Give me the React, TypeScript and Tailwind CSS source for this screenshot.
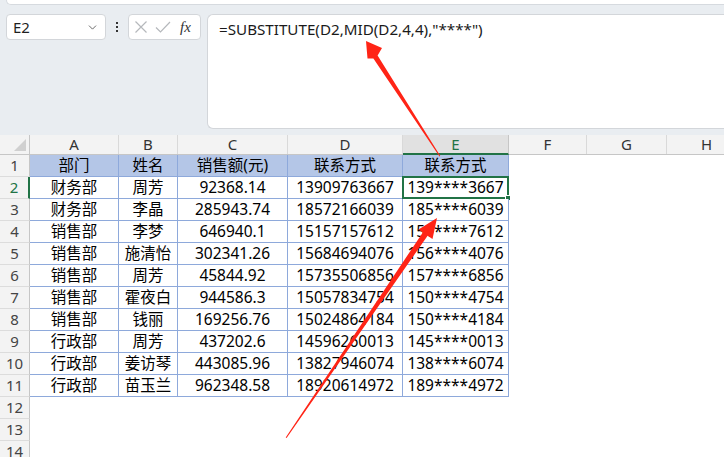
import { ChevronDown } from "lucide-react";

const font = { fontFamily: '"Noto Sans", "Noto Sans CJK SC", sans-serif' };

const cols = [
  { key: "A", w: "w-[89px]" },
  { key: "B", w: "w-[59px]" },
  { key: "C", w: "w-[110px]" },
  { key: "D", w: "w-[115px]" },
  { key: "E", w: "w-[106px]" },
  { key: "F", w: "w-[78px]" },
  { key: "G", w: "w-[80px]" },
  { key: "H", w: "w-[80px]" },
];

const header = ["部门", "姓名", "销售额(元)", "联系方式", "联系方式"];

const data = [
  ["财务部", "周芳", "92368.14", "13909763667", "139****3667"],
  ["财务部", "李晶", "285943.74", "18572166039", "185****6039"],
  ["销售部", "李梦", "646940.1", "15157157612", "151****7612"],
  ["销售部", "施清怡", "302341.26", "15684694076", "156****4076"],
  ["销售部", "周芳", "45844.92", "15735506856", "157****6856"],
  ["销售部", "霍夜白", "944586.3", "15057834754", "150****4754"],
  ["销售部", "钱丽", "169256.76", "15024864184", "150****4184"],
  ["行政部", "周芳", "437202.6", "14596260013", "145****0013"],
  ["行政部", "姜访琴", "443085.96", "13827946074", "138****6074"],
  ["行政部", "苗玉兰", "962348.58", "18920614972", "189****4972"],
];

const FormulaBar = () => (
  <div className="h-[135px] bg-[#e9edf1] shrink-0">
    <div className="ml-[6px] h-[5px] bg-white rounded-bl-md border-b border-l border-[#d6dadf]" />
    <div className="flex items-start mt-[9px] pl-[6px]">
      <div className="w-[100px] h-[26px] bg-white border border-[#d3d6da] rounded flex items-center justify-between pl-[6px] pr-[6px]">
        <span className="text-[15px] text-[#1f1f1f]">E2</span>
        <ChevronDown className="w-[13px] h-[13px] text-[#555]" strokeWidth={1.6} />
      </div>
      <div className="w-[22px] h-[26px] flex flex-col items-center justify-center gap-[2px]">
        <span className="w-[2px] h-[2px] bg-[#333]" />
        <span className="w-[2px] h-[2px] bg-[#333]" />
        <span className="w-[2px] h-[2px] bg-[#333]" />
      </div>
      <div className="w-[73px] h-[26px] bg-white border border-[#d3d6da] rounded flex items-center pl-[5px] gap-[7px]">
        <svg width="14" height="14" viewBox="0 0 14 14">
          <path d="M1.5 1.5 L12.5 12.5 M12.5 1.5 L1.5 12.5" stroke="#b5b8bc" strokeWidth="1.2" fill="none" />
        </svg>
        <svg width="16" height="14" viewBox="0 0 16 14">
          <path d="M1 7.5 L5.5 12 L15 2" stroke="#b5b8bc" strokeWidth="1.2" fill="none" />
        </svg>
        <span className="text-[15px] italic text-[#333] ml-[2px]" style={{ fontFamily: '"Liberation Serif", serif' }}>
          fx
        </span>
      </div>
      <div className="ml-[6px] flex-1 h-[115px] bg-white border border-[#d3d6da] rounded-l-md border-r-0 pl-[11px] pt-[2px]">
        <span className="text-[15.2px] leading-[20px] text-[#1a1a1a]">=SUBSTITUTE(D2,MID(D2,4,4),"****")</span>
      </div>
    </div>
  </div>
);

const ColumnHeader = () => (
  <div className="flex h-[20px] bg-[#f3f3f3] border-b border-[#c6c6c6] shrink-0">
    <div className="w-[30px] shrink-0 border-r border-[#c6c6c6] relative">
      <svg className="absolute right-[3px] bottom-[3px]" width="12" height="12" viewBox="0 0 12 12">
        <path d="M12 0 L12 12 L0 12 Z" fill="#d0d0d0" />
      </svg>
    </div>
    {cols.map((c) => (
      <div
        key={c.key}
        className={`${c.w} shrink-0 flex items-center justify-center text-[15px] border-r ${
          c.key === "E"
            ? "bg-[#e1e1e1] text-[#217346] border-b-2 border-b-[#217346] border-r-[#c6c6c6] -mb-[1px]"
            : "text-[#333] border-[#d9d9d9]"
        }`}
      >
        {c.key}
      </div>
    ))}
  </div>
);

const RowHead = ({ n }: { n: number }) => (
  <div
    className={`w-[30px] shrink-0 bg-[#f3f3f3] flex items-center justify-center text-[15px] border-b border-b-[#dcdcdc] ${
      n === 2 ? "text-[#217346] border-r-2 border-r-[#217346]" : "text-[#444] border-r border-r-[#c6c6c6]"
    }`}
  >
    {n}
  </div>
);

const Cell = ({ w, children, head, selected }: { w: string; children: string; head?: boolean; selected?: boolean }) => (
  <div
    className={`${w} shrink-0 relative flex items-center justify-center text-[15.5px] text-black border-r border-b border-[#8ea9db] ${
      head ? "bg-[#b4c6e7]" : "bg-white"
    }`}
  >
    {children}
    {selected && (
      <div className="absolute -left-[1px] -top-[1px] -right-[1px] -bottom-[1px] border-2 border-[#217346]">
        <span className="absolute -right-[4px] -bottom-[4px] w-[6px] h-[6px] bg-[#217346] border border-white" />
      </div>
    )}
  </div>
);

const Sheet = () => (
  <div className="flex flex-col bg-white flex-1">
    <ColumnHeader />
    <div className="flex h-[22px]">
      <RowHead n={1} />
      {header.map((h, i) => (
        <Cell key={i} w={cols[i].w} head>
          {h}
        </Cell>
      ))}
    </div>
    {data.map((r, ri) => (
      <div key={ri} className="flex h-[22px]">
        <RowHead n={ri + 2} />
        {r.map((v, i) => (
          <Cell key={i} w={cols[i].w} selected={ri === 0 && i === 4}>
            {v}
          </Cell>
        ))}
      </div>
    ))}
    {[12, 13, 14].map((n) => (
      <div key={n} className="flex h-[22px]">
        <RowHead n={n} />
      </div>
    ))}
  </div>
);

const Arrows = () => (
  <svg className="absolute inset-0 pointer-events-none" width="724" height="457" viewBox="0 0 724 457">
    <polygon
      points="366,41 382,48 377.6,55.6 440.3,156 439.5,156.4 373.4,58.5 367.5,58.5"
      fill="#ff2416"
    />
    <polygon
      points="437,218 432.5,239 427.6,235.7 286.6,438 285.7,437.6 422.8,232.4 418.5,229.5"
      fill="#ff2416"
    />
  </svg>
);

export default function App() {
  return (
    <div className="relative w-[724px] h-[457px] overflow-hidden flex flex-col bg-white" style={font}>
      <FormulaBar />
      <Sheet />
      <Arrows />
    </div>
  );
}
